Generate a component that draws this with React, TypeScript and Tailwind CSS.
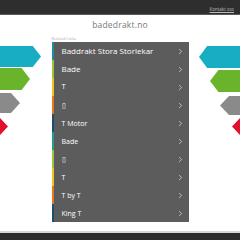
import React from 'react';
import { ChevronRight } from 'lucide-react';

interface LinkRow {
  label: string;
  accent: string;
  size: string;
}

const rows: LinkRow[] = [
  { label: 'Baddrakt Stora Storlekar', accent: 'bg-[#1b8f9e]', size: 'text-[8px]' },
  { label: 'Bade', accent: 'bg-[#9cc43a]', size: 'text-[8px]' },
  { label: 'T', accent: 'bg-[#f0c419]', size: 'text-[7.5px]' },
  { label: '\u25AF', accent: 'bg-[#e8781e]', size: 'text-[7px]' },
  { label: 'T Motor', accent: 'bg-[#1c4f6e]', size: 'text-[7px]' },
  { label: 'Bade', accent: 'bg-[#1ea08a]', size: 'text-[7px]' },
  { label: '\u25AF', accent: 'bg-[#9cc43a]', size: 'text-[7px]' },
  { label: 'T', accent: 'bg-[#f0c419]', size: 'text-[7px]' },
  { label: 'T by T', accent: 'bg-[#e8781e]', size: 'text-[7px]' },
  { label: 'King T', accent: 'bg-[#1c4f6e]', size: 'text-[7px]' },
];

export default function App() {
  return (
    <div className="relative w-[240px] h-[240px] overflow-hidden bg-white flex flex-col" style={{ fontFamily: '"Open Sans", "Liberation Sans", sans-serif' }}>
      {/* Decorative arrows, left */}
      <div className="absolute left-0 top-[46px] w-[41px] h-[21px] bg-[#17aec3] [clip-path:polygon(0_0,80%_0,100%_50%,80%_100%,0_100%)]" />
      <div className="absolute left-0 top-[68px] w-[30px] h-[22px] bg-[#6ab42c] [clip-path:polygon(0_0,72%_0,100%_50%,72%_100%,0_100%)]" />
      <div className="absolute left-0 top-[93px] w-[20px] h-[20px] bg-[#8a8a8a] [clip-path:polygon(0_0,55%_0,100%_50%,55%_100%,0_100%)]" />
      <div className="absolute left-0 top-[118px] w-[8px] h-[17px] bg-[#e0102e] [clip-path:polygon(0_0,0_0,100%_50%,0_100%,0_100%)]" />

      {/* Decorative arrows, right */}
      <div className="absolute right-0 top-[46px] w-[41px] h-[22px] bg-[#17aec3] [clip-path:polygon(20%_0,100%_0,100%_100%,20%_100%,0_50%)]" />
      <div className="absolute right-0 top-[70px] w-[30px] h-[22px] bg-[#6ab42c] [clip-path:polygon(28%_0,100%_0,100%_100%,28%_100%,0_50%)]" />
      <div className="absolute right-0 top-[96px] w-[20px] h-[19px] bg-[#8a8a8a] [clip-path:polygon(45%_0,100%_0,100%_100%,45%_100%,0_50%)]" />
      <div className="absolute right-0 top-[118px] w-[8px] h-[17px] bg-[#e0102e] [clip-path:polygon(100%_0,100%_100%,0_50%)]" />

      {/* Header */}
      <div className="h-[15px] shrink-0 bg-[#2e2e2e] border-b border-[#5a5a5a] flex items-end justify-end pr-[6px] pb-[3px]">
        <span className="text-[4.5px] leading-none text-[#bbbbbb] underline">Kontakt oss</span>
      </div>

      {/* Content */}
      <div className="flex-1 flex flex-col items-center">
        <div className="mt-[4px] text-[8.5px] leading-[12px] text-[#7a7a7a] tracking-[0.2px]">badedrakt.no</div>
        <div className="w-[137px] mt-[5px] text-[4px] leading-[5px] text-[#aaaaaa]">Related Links</div>
        <div className="w-[137px] mt-[1px] bg-[#5c5c5c] flex flex-col">
          {rows.map((row, i) => (
            <div key={i} className="h-[18px] flex items-center">
              <div className={`w-[2px] h-full ${row.accent}`} />
              <span className={`flex-1 pl-[8px] ${row.size} leading-none text-white`}>{row.label}</span>
              <ChevronRight className="w-[9px] h-[9px] mr-[4px] text-[#d8d8d8]" strokeWidth={2} />
            </div>
          ))}
        </div>
      </div>

      {/* Footer */}
      <div className="h-[9px] shrink-0 border-t-2 border-[#d8d8d8] bg-[#2e2e2e]" />
    </div>
  );
}
